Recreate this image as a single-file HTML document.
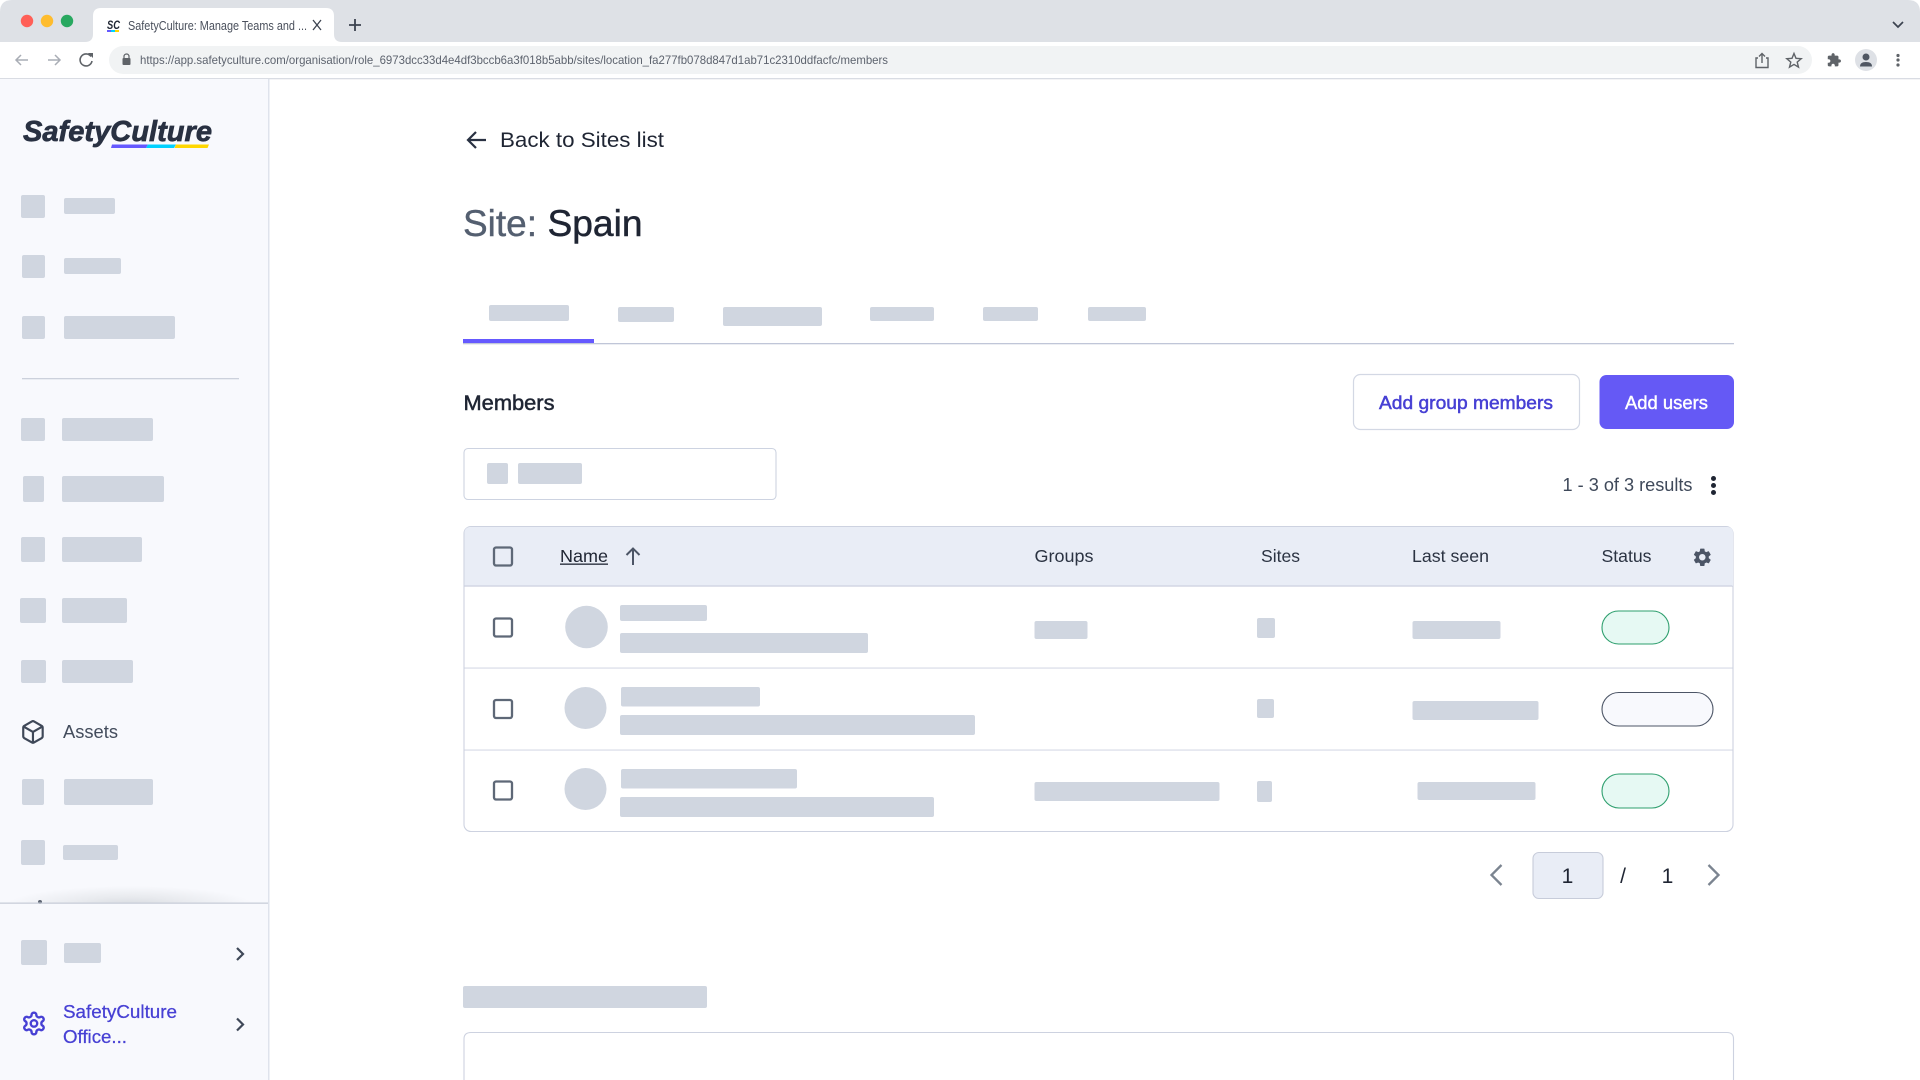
<!DOCTYPE html>
<html lang="en"><head><meta charset="utf-8"><title>SafetyCulture: Manage Teams and Sites</title>
<style>
html,body{margin:0;padding:0;background:#fff;width:1920px;height:1080px;overflow:hidden}
svg{display:block}
text{font-family:"Liberation Sans","Noto Sans CJK JP",sans-serif}
.s{fill:#d0d6e0}
</style></head><body>
<svg width="1920" height="1080" viewBox="0 0 1920 1080" xmlns="http://www.w3.org/2000/svg">
<!-- browser chrome -->
<rect width="1920" height="1080" fill="#fff"/>
<path d="M0 42V12Q0 0 12 0H1908Q1920 0 1920 12V42Z" fill="#dee1e6"/>
<circle cx="27" cy="21" r="6.2" fill="#ff5f57"/><circle cx="47" cy="21" r="6.2" fill="#febc2e"/><circle cx="67" cy="21" r="6.2" fill="#28a860"/>
<path d="M85 42Q93 42 93 34V16Q93 8 101 8H326Q334 8 334 16V34Q334 42 342 42Z" fill="#fff"/>
<text x="107" y="29" font-size="12" font-weight="700" font-style="italic" fill="#1f2533" textLength="13" lengthAdjust="spacingAndGlyphs">SC</text>
<rect x="107" y="30" width="4" height="2" fill="#6559ff"/><rect x="111" y="30" width="4" height="2" fill="#00d1ff"/><rect x="115" y="30" width="4" height="2" fill="#ffd700"/>
<text x="128" y="30" font-size="13" fill="#4a505c" textLength="179" lengthAdjust="spacingAndGlyphs">SafetyCulture: Manage Teams and ...</text>
<path d="M313 20l8 10M321 20l-8 10" stroke="#3c4350" stroke-width="1.3" fill="none"/>
<path d="M349 25h12M355 19v12" stroke="#3c4350" stroke-width="1.8" fill="none"/>
<path d="M1893 22l5 5 5-5" stroke="#3c4350" stroke-width="1.7" fill="none"/>
<rect x="0" y="42" width="1920" height="36" fill="#fff"/>
<rect x="0" y="78" width="1920" height="1.3" fill="#d9dce3"/>
<rect x="109" y="46" width="1703" height="28" rx="14" fill="#f1f3f4"/>
<path d="M28 60H16M21 55l-5 5 5 5" stroke="#a9adb5" stroke-width="1.5" fill="none"/>
<path d="M48 60h12M55 55l5 5-5 5" stroke="#a9adb5" stroke-width="1.5" fill="none"/>
<path d="M91 56.5A6 6 0 1 0 92 61" stroke="#5f6368" stroke-width="1.6" fill="none"/><path d="M88 53h5v5z" fill="#5f6368"/>
<rect x="122.500" y="58" width="8" height="7" rx="1" fill="#5f6368"/><path d="M124 58v-1.500a2.500 2.500 0 0 1 5 0V58" stroke="#5f6368" stroke-width="1.200" fill="none"/>
<text x="140" y="64" font-size="12" fill="#5d636e" textLength="748" lengthAdjust="spacingAndGlyphs">https://app.safetyculture.com/organisation/role_6973dcc33d4e4df3bccb6a3f018b5abb/sites/location_fa277fb078d847d1ab71c2310ddfacfc/members</text>
<path d="M1758 58h-2v9.500h12V58h-2M1762 63v-9M1759 56.500l3-3 3 3" stroke="#5f6368" stroke-width="1.400" fill="none"/>
<path d="M1794 53.500l2 4.800 5.200.4-4 3.400 1.300 5-4.500-2.700-4.500 2.700 1.300-5-4-3.400 5.200-.4z" stroke="#5f6368" stroke-width="1.400" fill="none"/>
<g transform="translate(1826.500 52.500) scale(.63)"><path fill="#5f6368" d="M20.500 11H19V7c0-1.100-.9-2-2-2h-4V3.500C13 2.120 11.880 1 10.500 1S8 2.120 8 3.500V5H4c-1.100 0-1.990.9-1.990 2v3.800H3.500c1.490 0 2.700 1.210 2.700 2.700s-1.210 2.700-2.700 2.700H2V20c0 1.100.9 2 2 2h3.800v-1.500c0-1.490 1.210-2.700 2.700-2.700 1.490 0 2.700 1.210 2.700 2.700V22H17c1.100 0 2-.9 2-2v-4h1.500c1.380 0 2.500-1.120 2.500-2.500S21.880 11 20.500 11z"/></g>
<circle cx="1866" cy="60" r="11" fill="#dee1e6"/><circle cx="1866" cy="57" r="3.500" fill="#4f5662"/><path d="M1860 66.500q0-4.500 6-4.500t6 4.500z" fill="#4f5662"/>
<circle cx="1898" cy="55.500" r="1.600" fill="#5f6368"/><circle cx="1898" cy="60" r="1.600" fill="#5f6368"/><circle cx="1898" cy="65" r="1.600" fill="#5f6368"/>

<!-- sidebar -->
<rect x="0" y="79" width="268" height="1001" fill="#f8f9fd"/>
<rect x="268" y="79" width="1.500" height="1001" fill="#dfe3ec"/>
<text x="23" y="141" font-size="29" font-weight="700" font-style="italic" fill="#293142" stroke="#293142" stroke-width=".7" textLength="189" lengthAdjust="spacingAndGlyphs">SafetyCulture</text>
<path d="M112 144.500h36l-2 3.500h-35z" fill="#6559ff"/><path d="M148 144.500h28l-2 3.500h-28z" fill="#00d1ff"/><path d="M176 144.500h33l-1.500 3.500h-33z" fill="#ffd700"/>

<rect class="s" x="21" y="195" width="24" height="23" rx="2"/><rect class="s" x="64" y="198" width="51" height="16" rx="2"/>
<rect class="s" x="22" y="255" width="23" height="23" rx="2"/><rect class="s" x="64" y="258" width="57" height="16" rx="2"/>
<rect class="s" x="22" y="316" width="23" height="23" rx="2"/><rect class="s" x="64" y="316" width="111" height="23" rx="2"/>
<rect x="22" y="378" width="217" height="1.300" fill="#ccd1dc"/>
<rect class="s" x="21" y="418" width="24" height="23" rx="2"/><rect class="s" x="62" y="418" width="91" height="23" rx="2"/>
<rect class="s" x="23" y="476" width="21" height="26" rx="2"/><rect class="s" x="62" y="476" width="102" height="26" rx="2"/>
<rect class="s" x="21" y="537" width="24" height="25" rx="2"/><rect class="s" x="62" y="537" width="80" height="25" rx="2"/>
<rect class="s" x="20" y="598" width="26" height="25" rx="2"/><rect class="s" x="62" y="598" width="65" height="25" rx="2"/>
<rect class="s" x="21" y="660" width="25" height="23" rx="2"/><rect class="s" x="62" y="660" width="71" height="23" rx="2"/>
<g transform="translate(20 719) scale(1.080)" fill="none" stroke="#3f4858" stroke-width="2" stroke-linejoin="round"><path d="M21 16V8a2 2 0 0 0-1-1.730l-7-4a2 2 0 0 0-2 0l-7 4A2 2 0 0 0 3 8v8a2 2 0 0 0 1 1.730l7 4a2 2 0 0 0 2 0l7-4A2 2 0 0 0 21 16z"/><path d="M3.300 7L12 12l8.700-5M12 22V12"/></g>
<text x="63" y="738" font-size="18" fill="#434c5c" textLength="55" lengthAdjust="spacingAndGlyphs">Assets</text>
<rect class="s" x="22" y="779" width="22" height="26" rx="2"/><rect class="s" x="64" y="779" width="89" height="26" rx="2"/>
<rect class="s" x="21" y="840" width="24" height="25" rx="2"/><rect class="s" x="63" y="845" width="55" height="15" rx="2"/>
<defs><radialGradient id="sh" gradientUnits="userSpaceOnUse" cx="0" cy="0" r="1" gradientTransform="translate(130 906) scale(125 20)"><stop offset="0" stop-color="#d6d9df"/><stop offset=".45" stop-color="#e8eaee"/><stop offset="1" stop-color="#f8f9fd"/></radialGradient></defs>
<rect x="5" y="884" width="250" height="19" fill="url(#sh)"/>
<circle cx="40" cy="902" r="2" fill="#5d6573"/>
<rect x="0" y="902.500" width="268" height="1.300" fill="#c9ced9"/>
<rect class="s" x="21" y="940" width="26" height="25" rx="2"/><rect class="s" x="64" y="943" width="37" height="20" rx="2"/>
<path d="M237 948l6 6-6 6" stroke="#3f4858" stroke-width="2.200" fill="none"/>
<g transform="translate(21 1010.500) scale(1.080)" fill="none" stroke="#4740d4" stroke-width="2.200"><path d="M12.220 2h-.44a2 2 0 0 0-2 2v.18a2 2 0 0 1-1 1.730l-.43.25a2 2 0 0 1-2 0l-.15-.08a2 2 0 0 0-2.730.73l-.22.38a2 2 0 0 0 .73 2.730l.15.1a2 2 0 0 1 1 1.720v.51a2 2 0 0 1-1 1.740l-.15.09a2 2 0 0 0-.73 2.730l.22.38a2 2 0 0 0 2.730.73l.15-.08a2 2 0 0 1 2 0l.43.25a2 2 0 0 1 1 1.730V20a2 2 0 0 0 2 2h.44a2 2 0 0 0 2-2v-.18a2 2 0 0 1 1-1.730l.43-.25a2 2 0 0 1 2 0l.15.08a2 2 0 0 0 2.730-.73l.22-.39a2 2 0 0 0-.73-2.730l-.15-.08a2 2 0 0 1-1-1.740v-.5a2 2 0 0 1 1-1.740l.15-.09a2 2 0 0 0 .73-2.730l-.22-.38a2 2 0 0 0-2.730-.73l-.15.08a2 2 0 0 1-2 0l-.43-.25a2 2 0 0 1-1-1.730V4a2 2 0 0 0-2-2z"/><circle cx="12" cy="12" r="3"/></g>
<text x="63" y="1018" font-size="18" fill="#4740d4" stroke="#4740d4" stroke-width=".25" textLength="114" lengthAdjust="spacingAndGlyphs">SafetyCulture</text>
<text x="63" y="1043" font-size="18" fill="#4740d4" stroke="#4740d4" stroke-width=".25" textLength="64" lengthAdjust="spacingAndGlyphs">Office...</text>
<path d="M237 1018.500l6 6-6 6" stroke="#3f4858" stroke-width="2.200" fill="none"/>

<!-- header -->
<path d="M486 140H469M476 132l-8 8 8 8" stroke="#293142" stroke-width="2.200" fill="none"/>
<text x="500" y="147" font-size="21" fill="#1f2533" textLength="164" lengthAdjust="spacingAndGlyphs">Back to Sites list</text>
<text x="463" y="236" font-size="37" fill="#545f70" stroke="#545f70" stroke-width=".4" textLength="74" lengthAdjust="spacingAndGlyphs">Site:</text>
<text x="547.500" y="236" font-size="37" fill="#1f2533" stroke="#1f2533" stroke-width=".5" textLength="95" lengthAdjust="spacingAndGlyphs">Spain</text>
<!-- tabs -->
<rect class="s" x="489" y="305" width="80" height="16" rx="2"/>
<rect class="s" x="618" y="307" width="56" height="15" rx="2"/>
<rect class="s" x="723" y="307" width="99" height="19" rx="2"/>
<rect class="s" x="870" y="307" width="64" height="14" rx="2"/>
<rect class="s" x="983" y="307" width="55" height="14" rx="2"/>
<rect class="s" x="1088" y="307" width="58" height="14" rx="2"/>
<rect x="463" y="343" width="1271" height="1.300" fill="#c0c6d8"/>
<rect x="463" y="339" width="131" height="4" fill="#6559ff"/>
<!-- members row -->
<text x="463.500" y="410" font-size="21" fill="#1f2533" stroke="#1f2533" stroke-width=".5" textLength="91" lengthAdjust="spacingAndGlyphs">Members</text>
<rect x="1353.500" y="374.500" width="226" height="55" rx="7" fill="#fff" stroke="#d3d8e4" stroke-width="1.200"/>
<text x="1379" y="409" font-size="18.500" fill="#4740d4" stroke="#4740d4" stroke-width=".5" textLength="174" lengthAdjust="spacingAndGlyphs">Add group members</text>
<rect x="1599.500" y="375" width="134.500" height="54" rx="7" fill="#6559f5"/>
<text x="1625" y="409" font-size="18.500" fill="#fff" stroke="#fff" stroke-width=".4" textLength="83" lengthAdjust="spacingAndGlyphs">Add users</text>
<rect x="464" y="448.500" width="312" height="51" rx="4" fill="#fff" stroke="#cdd3e1" stroke-width="1.100"/>
<rect class="s" x="487" y="463" width="21" height="21" rx="2"/><rect class="s" x="518" y="463" width="64" height="21" rx="2"/>
<text x="1562.500" y="491" font-size="18" fill="#3f495a" textLength="130" lengthAdjust="spacingAndGlyphs">1 - 3 of 3 results</text>
<circle cx="1713.500" cy="478.500" r="2.500" fill="#1f2533"/><circle cx="1713.500" cy="485.500" r="2.500" fill="#1f2533"/><circle cx="1713.500" cy="492.500" r="2.500" fill="#1f2533"/>
<!-- table -->
<rect x="464" y="526.500" width="1269" height="305" rx="7" fill="#fff" stroke="#cdd2e0" stroke-width="1.100"/>
<path d="M464.500 586V533Q464.500 527 471 527H1727Q1733 527 1733 533V586Z" fill="#e9edf6"/>
<rect x="464.500" y="585.500" width="1268" height="1.100" fill="#c7ccdc"/>
<rect x="464.500" y="667.500" width="1268" height="1.100" fill="#d5d9e5"/>
<rect x="464.500" y="749.500" width="1268" height="1.100" fill="#d5d9e5"/>
<g fill="none" stroke="#5e6877" stroke-width="2.300">
<rect x="494" y="547.500" width="18" height="18" rx="2"/><rect x="494" y="618.500" width="18" height="18" rx="2"/><rect x="494" y="700" width="18" height="18" rx="2"/><rect x="494" y="781.500" width="18" height="18" rx="2"/>
</g>
<text x="560" y="562" font-size="17.500" fill="#1f2533" textLength="48" lengthAdjust="spacingAndGlyphs">Name</text>
<rect x="560" y="563.500" width="48" height="1.300" fill="#1f2533"/>
<path d="M633 565V548.500M626.500 555l6.500-6.500 6.500 6.500" stroke="#4c5566" stroke-width="2" fill="none"/>
<text x="1034.500" y="562" font-size="17.500" fill="#2b3342" textLength="59" lengthAdjust="spacingAndGlyphs">Groups</text>
<text x="1261" y="562" font-size="17.500" fill="#2b3342" textLength="39" lengthAdjust="spacingAndGlyphs">Sites</text>
<text x="1412" y="562" font-size="17.500" fill="#2b3342" textLength="77" lengthAdjust="spacingAndGlyphs">Last seen</text>
<text x="1601.500" y="562" font-size="17.500" fill="#2b3342" textLength="50" lengthAdjust="spacingAndGlyphs">Status</text>
<g transform="translate(1691.500 546.500) scale(.9)"><path fill="#4c5566" d="M19.140 12.940c.04-.3.06-.61.06-.94 0-.32-.02-.64-.07-.94l2.030-1.580a.49.49 0 0 0 .12-.61l-1.920-3.320a.488.488 0 0 0-.59-.22l-2.390.96c-.5-.38-1.030-.7-1.620-.94l-.36-2.540a.484.484 0 0 0-.48-.41h-3.840c-.24 0-.43.17-.47.41l-.36 2.540c-.59.24-1.130.57-1.620.94l-2.390-.96c-.22-.08-.47 0-.59.22L2.740 8.870c-.12.21-.08.47.12.61l2.030 1.580c-.05.3-.09.63-.09.94s.02.64.07.94l-2.030 1.580a.49.49 0 0 0-.12.61l1.920 3.320c.12.22.37.29.59.22l2.390-.96c.5.38 1.030.7 1.620.94l.36 2.540c.05.24.24.41.48.41h3.840c.24 0 .44-.17.47-.41l.36-2.540c.59-.24 1.130-.56 1.620-.94l2.390.96c.22.08.47 0 .59-.22l1.920-3.320c.12-.22.07-.47-.12-.61l-2.010-1.580zM12 15.600c-1.980 0-3.600-1.620-3.600-3.600s1.620-3.600 3.600-3.600 3.600 1.620 3.600 3.600-1.620 3.600-3.600 3.600z"/></g>
<!-- row 1 -->
<circle class="s" cx="586.500" cy="627" r="21.300"/>
<rect class="s" x="620" y="605" width="87" height="16" rx="2"/><rect class="s" x="620" y="633" width="248" height="20" rx="2"/>
<rect class="s" x="1034.500" y="621" width="53" height="18" rx="2"/><rect class="s" x="1257" y="618" width="18" height="20" rx="2"/><rect class="s" x="1412.500" y="621" width="88" height="18" rx="2"/>
<rect x="1602" y="611" width="67" height="33" rx="16.500" fill="#e6f9f3" stroke="#2e9f6e" stroke-width="1.100"/>
<!-- row 2 -->
<circle class="s" cx="585.500" cy="708" r="21"/>
<rect class="s" x="621" y="687" width="139" height="19.500" rx="2"/><rect class="s" x="620" y="715" width="355" height="20" rx="2"/>
<rect class="s" x="1257" y="699" width="17" height="19" rx="2"/><rect class="s" x="1412.500" y="701" width="126" height="19" rx="2"/>
<rect x="1602" y="692.500" width="111" height="33.500" rx="16.800" fill="#f8f9fd" stroke="#4c5566" stroke-width="1.100"/>
<!-- row 3 -->
<circle class="s" cx="585.500" cy="789" r="21"/>
<rect class="s" x="621" y="769" width="176" height="19.500" rx="2"/><rect class="s" x="620" y="797" width="314" height="20" rx="2"/>
<rect class="s" x="1034.500" y="782" width="185" height="19" rx="2"/><rect class="s" x="1257" y="781" width="15" height="21" rx="2"/><rect class="s" x="1417.500" y="782" width="118" height="18" rx="2"/>
<rect x="1602" y="774" width="67" height="34" rx="17" fill="#e6f9f3" stroke="#2e9f6e" stroke-width="1.100"/>
<!-- pagination -->
<path d="M1501.500 865l-10 10 10 10" stroke="#7b8490" stroke-width="2.300" fill="none"/>
<rect x="1533" y="852.500" width="70" height="46" rx="6" fill="#e9edf6" stroke="#c7ccda" stroke-width="1.100"/>
<text x="1567.500" y="883" font-size="21" fill="#1f2533" text-anchor="middle">1</text>
<text x="1623" y="883" font-size="21" fill="#1f2533" text-anchor="middle">/</text>
<text x="1667.500" y="883" font-size="21" fill="#1f2533" text-anchor="middle">1</text>
<path d="M1708.500 865l10 10-10 10" stroke="#7b8490" stroke-width="2.300" fill="none"/>
<!-- lower section -->
<rect class="s" x="463" y="986" width="244" height="22" rx="2"/>
<path d="M464 1081V1039Q464 1032.500 471 1032.500H1727Q1733.500 1032.500 1733.500 1039V1081" fill="#fff" stroke="#cdd2e0" stroke-width="1.100"/>
</svg>
</body></html>
